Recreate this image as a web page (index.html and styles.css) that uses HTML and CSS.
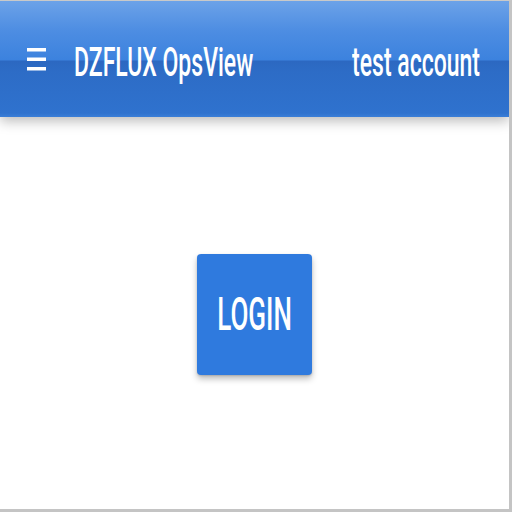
FILE: index.html
```html
<!DOCTYPE html>
<html lang="en">
<head>
<meta charset="utf-8">
<title>DZFLUX OpsView</title>
<link rel="stylesheet" href="styles.css">
</head>
<body>
<div class="frame">
  <header class="appbar">
    <svg class="menu" width="19" height="24" viewBox="0 0 19 24" aria-hidden="true">
      <rect x="0" y="1" width="19" height="3.5" fill="#fff"/>
      <rect x="0" y="10.5" width="19" height="3.5" fill="#fff"/>
      <rect x="0" y="20" width="19" height="3.5" fill="#fff"/>
    </svg>
    <span class="title"><span class="stretch">DZFLUX OpsView</span></span>
    <span class="account"><span class="stretch">test account</span></span>
  </header>
  <main class="content">
    <button class="login"><span class="stretch">LOGIN</span></button>
  </main>
</div>
</body>
</html>
```

FILE: styles.css
```css
html, body {
  margin: 0;
  padding: 0;
  background: #ffffff;
}
body {
  font-family: Roboto, "Liberation Sans", sans-serif;
}
.frame {
  width: 512px;
  height: 512px;
  box-sizing: border-box;
  border-top: 1px solid #c9c9c9;
  border-right: 3px solid #c4c4c4;
  border-bottom: 3px solid #c4c4c4;
  display: flex;
  flex-direction: column;
  overflow: hidden;
}
.appbar {
  height: 116px;
  flex: none;
  display: flex;
  align-items: center;
  padding: 0 29px 0 27px;
  background: linear-gradient(to bottom, #6ca2e8 0px, #4d8de2 30px, #3c82de 59px, #2c68c1 60px, #2d6cc6 70px, #2f72ce 112px, #3a7ed8 116px);
  box-shadow: 0 4px 12px rgba(0, 0, 0, 0.28);
  position: relative;
  z-index: 1;
  color: #fff;
}
.menu {
  display: block;
  flex: none;
}
.stretch {
  display: inline-block;
  transform: scaleY(1.75);
}
.title {
  margin-left: 28px;
  font-size: 23px;
  font-weight: 500;
  line-height: 24px;
  padding-top: 10px;
}
.account {
  margin-left: auto;
  font-size: 23px;
  font-weight: 500;
  line-height: 24px;
  padding-top: 10px;
}
.content {
  flex: 1;
  display: flex;
  align-items: center;
  justify-content: center;
}
.login {
  width: 115px;
  height: 121px;
  border: none;
  border-radius: 4px;
  background: #2f7ade;
  color: #fff;
  font-family: Roboto, "Liberation Sans", sans-serif;
  font-size: 26px;
  font-weight: 500;
  padding: 0;
  box-shadow: 0 4px 6px rgba(0, 0, 0, 0.25), 0 1px 2px rgba(0, 0, 0, 0.15);
  margin-top: 2px;
}
```
